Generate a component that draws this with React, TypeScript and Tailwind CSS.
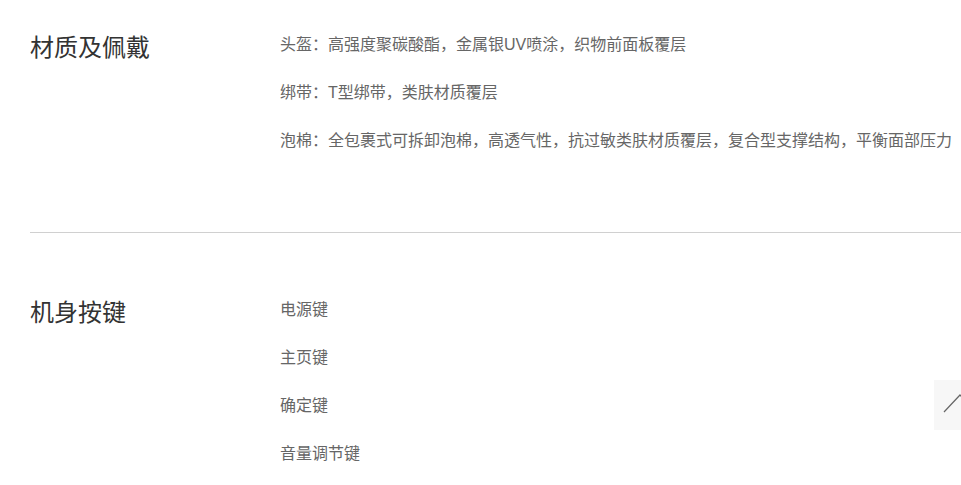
import React from "react";

const sections = [
  {
    title: "材质及佩戴",
    items: [
      "头盔：高强度聚碳酸酯，金属银UV喷涂，织物前面板覆层",
      "绑带：T型绑带，类肤材质覆层",
      "泡棉：全包裹式可拆卸泡棉，高透气性，抗过敏类肤材质覆层，复合型支撑结构，平衡面部压力",
    ],
  },
  {
    title: "机身按键",
    items: ["电源键", "主页键", "确定键", "音量调节键"],
  },
];

export default function App() {
  const font = { fontFamily: '"Liberation Sans", "Noto Sans CJK SC", sans-serif' };
  return (
    <div className="relative w-[961px] h-[485px] overflow-hidden bg-white" style={font}>
      <div className="pl-[30px]">
        <div className="flex pt-[21px] pb-[67px]">
          <div className="w-[250px] mt-[3px] text-[24px] leading-[48px] text-[#333]">{sections[0].title}</div>
          <div className="flex flex-col text-[16px] leading-[48px] text-[#666] whitespace-nowrap">
            {sections[0].items.map((t) => (
              <div key={t}>{t}</div>
            ))}
          </div>
        </div>
        <div className="h-px bg-[#d0d0d0]" />
        <div className="flex pt-[53px]">
          <div className="w-[250px] mt-[3px] text-[24px] leading-[48px] text-[#333]">{sections[1].title}</div>
          <div className="flex flex-col text-[16px] leading-[48px] text-[#666]">
            {sections[1].items.map((t) => (
              <div key={t}>{t}</div>
            ))}
          </div>
        </div>
      </div>
      <div className="absolute left-[934px] top-[380px] w-[50px] h-[50px] bg-[#f7f7f7]">
        <svg width="50" height="50" viewBox="0 0 50 50" className="absolute left-0 top-0">
          <polyline points="10,32 26,15 42,32" fill="none" stroke="#666" strokeWidth="1.2" />
        </svg>
      </div>
    </div>
  );
}
